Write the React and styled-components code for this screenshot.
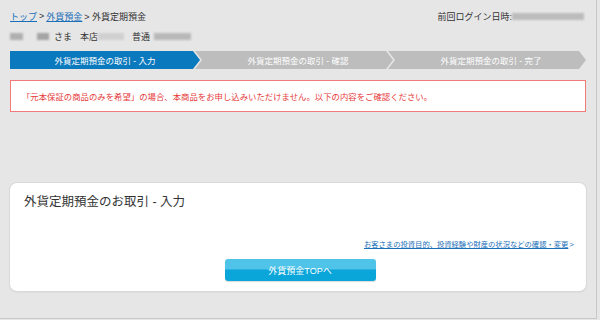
import React from 'react';
import styled, { createGlobalStyle } from 'styled-components';

const LINK = '#1a6fb8';
const RED = '#e63a3a';

const GlobalStyle = createGlobalStyle`
  html, body {
    margin: 0;
    padding: 0;
    background: #e6e6e6;
  }
  body {
    font-family: "Liberation Sans", "Noto Sans CJK JP", sans-serif;
    color: #333;
  }
`;

const Frame = styled.div`
  width: 597px;
  height: 319px;
  box-sizing: border-box;
  border-right: 1px solid #c8c8c8;
  border-bottom: 1px solid #c8c8c8;
  background: #e6e6e6;
  padding: 9px 10px 0 10px;
  overflow: hidden;
`;

const TopRow = styled.div`
  display: flex;
  justify-content: space-between;
  align-items: center;
  height: 14px;
  font-size: 9px;
`;

const Crumbs = styled.div`
  display: flex;
  align-items: center;
  gap: 2px;
`;

const Crumb = styled.a`
  color: ${LINK};
  text-decoration: underline;
`;

const LastLogin = styled.div`
  display: flex;
  align-items: center;
  padding-right: 2px;
`;

const Blur = styled.span`
  display: inline-block;
  width: ${p => p.$w}px;
  height: 7px;
  background: ${p => p.$c || '#a8a8a8'};
  filter: blur(0.9px);
`;

const UserRow = styled.div`
  display: flex;
  align-items: center;
  height: 14px;
  margin-top: 6px;
  font-size: 9px;
`;

const Group = styled.span`
  display: inline-flex;
  align-items: center;
  gap: ${p => p.$gap || 0}px;
  margin-right: ${p => p.$mr || 0}px;
`;

const Steps = styled.div`
  display: flex;
  height: 18px;
  margin-top: 8px;
`;

const Step = styled.div`
  flex: 1;
  display: flex;
  align-items: center;
  justify-content: center;
  margin-left: ${p => (p.$first ? 0 : -5)}px;
  padding-left: ${p => (p.$first ? 0 : 8)}px;
  background: ${p => (p.$active ? '#0b79bd' : '#bdbdbd')};
  color: #fff;
  font-size: 8.5px;
  clip-path: ${p =>
    p.$first
      ? 'polygon(0 0, calc(100% - 7px) 0, 100% 50%, calc(100% - 7px) 100%, 0 100%)'
      : 'polygon(0 0, calc(100% - 7px) 0, 100% 50%, calc(100% - 7px) 100%, 0 100%, 7px 50%)'};
`;

const ErrorBox = styled.div`
  margin-top: 11px;
  height: 32px;
  box-sizing: border-box;
  border: 1px solid #f27a7a;
  background: #fff;
  color: ${RED};
  font-size: 8.4px;
  display: flex;
  align-items: center;
  padding-left: 11px;
`;

const Card = styled.div`
  margin-top: 71px;
  height: 108px;
  box-sizing: border-box;
  background: #fff;
  border-radius: 7px;
  box-shadow: 0 0 0 1px #d9d9d9, 0 1px 2px rgba(0, 0, 0, 0.12);
  padding: 10px 12px 0 14px;
  display: flex;
  flex-direction: column;
`;

const CardTitle = styled.h2`
  margin: 0;
  font-size: 12.5px;
  font-weight: normal;
  color: #333;
  height: 18px;
  line-height: 18px;
`;

const LinkRow = styled.div`
  display: flex;
  justify-content: flex-end;
  align-items: center;
  margin-top: 28px;
  font-size: 7.3px;
  color: ${LINK};
`;

const MoreLink = styled.a`
  color: ${LINK};
  text-decoration: underline;
`;

const Chevron = styled.span`
  font-size: 8px;
  margin-left: 1px;
`;

const ButtonRow = styled.div`
  display: flex;
  justify-content: center;
  margin-top: 10px;
  padding-left: 2px;
`;

const TopButton = styled.button`
  width: 151px;
  height: 22px;
  border: none;
  border-radius: 3px;
  background: linear-gradient(#50c3e8 0%, #50c3e8 45%, #0aa6da 50%, #0aa6da 100%);
  color: #fff;
  font-family: inherit;
  font-size: 9px;
  padding: 0;
  box-shadow: 0 1px 1px rgba(0, 0, 0, 0.15);
`;

export default function App() {
  return (
    <>
      <GlobalStyle />
      <Frame>
        <TopRow>
          <Crumbs>
            <Crumb>トップ</Crumb>
            <span>&gt;</span>
            <Crumb>外貨預金</Crumb>
            <span>&gt; 外貨定期預金</span>
          </Crumbs>
          <LastLogin>
            前回ログイン日時:
            <Blur $w={72} $c="#bcbcbc" />
          </LastLogin>
        </TopRow>
        <UserRow>
          <Group $mr={14}>
            <Blur $w={13} $c="#b0b0b0" />
          </Group>
          <Group $mr={8} $gap={5}>
            <Blur $w={12} $c="#a4a4a4" />
            <span>さま</span>
          </Group>
          <Group $mr={8}>
            <span>本店</span>
            <Blur $w={26} $c="#d0d0d0" />
          </Group>
          <Group $gap={4}>
            <span>普通</span>
            <Blur $w={37} $c="#b8b8b8" />
          </Group>
        </UserRow>
        <Steps>
          <Step $first $active>外貨定期預金の取引 - 入力</Step>
          <Step>外貨定期預金の取引 - 確認</Step>
          <Step>外貨定期預金の取引 - 完了</Step>
        </Steps>
        <ErrorBox>
          「元本保証の商品のみを希望」の場合、本商品をお申し込みいただけません。以下の内容をご確認ください。
        </ErrorBox>
        <Card>
          <CardTitle>外貨定期預金のお取引 - 入力</CardTitle>
          <LinkRow>
            <MoreLink>お客さまの投資目的、投資経験や財産の状況などの確認・変更</MoreLink>
            <Chevron>&gt;</Chevron>
          </LinkRow>
          <ButtonRow>
            <TopButton>外貨預金TOPへ</TopButton>
          </ButtonRow>
        </Card>
      </Frame>
    </>
  );
}
